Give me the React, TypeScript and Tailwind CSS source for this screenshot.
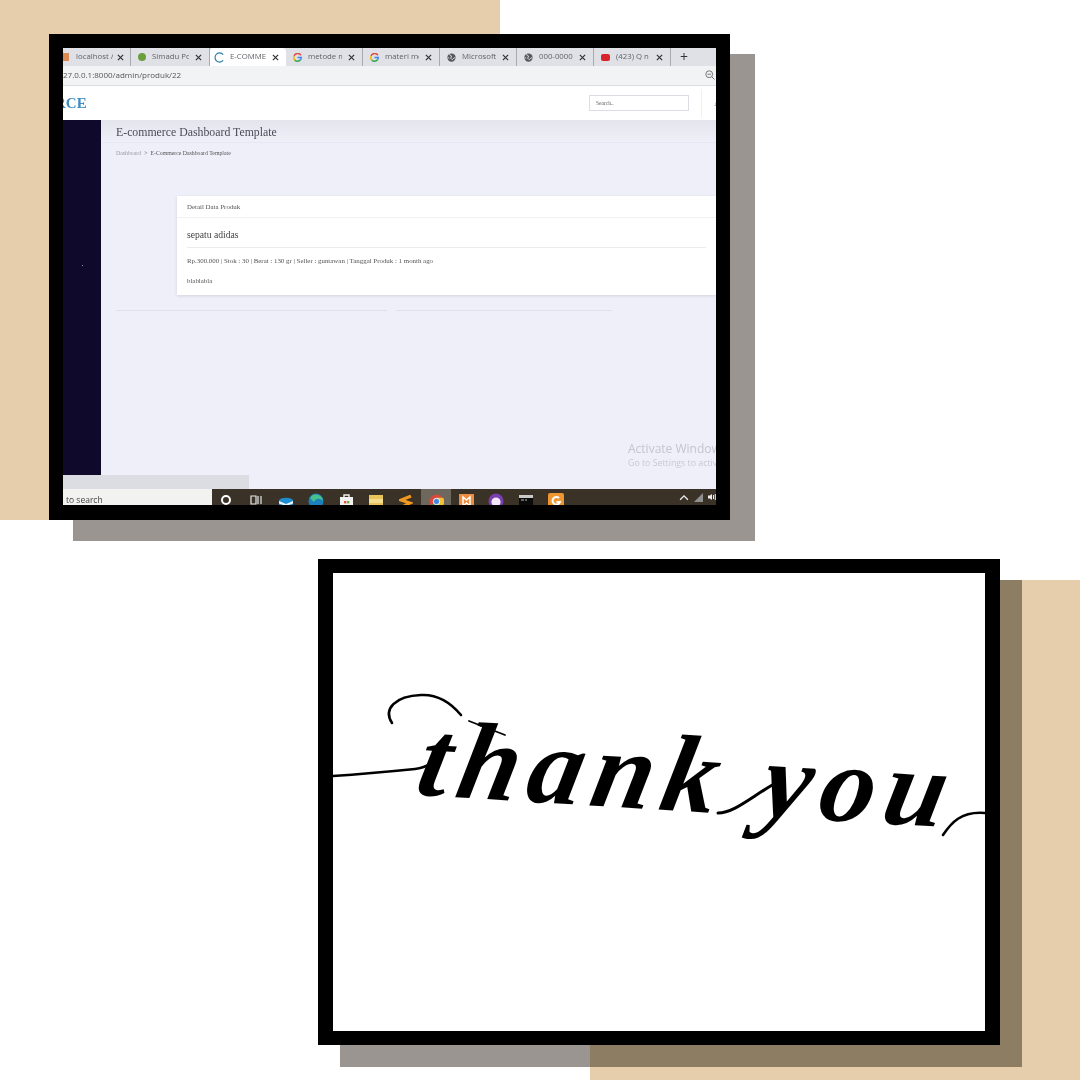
import React from "react";

const tabs = [
  { t: "Simadu Pol", c: "#6b9e3c", w: 79 },
  { t: "E-COMMER", c: "active", w: 76 },
  { t: "metode m", c: "g", w: 77 },
  { t: "materi met", c: "g", w: 77 },
  { t: "Microsoft", c: "globe", w: 77 },
  { t: "000-0000-", c: "globe", w: 77 },
  { t: "(423) Q n A", c: "yt", w: 77 },
];

function TabIcon({ c }: { c: string }) {
  if (c === "active")
    return (
      <svg width="11" height="11" viewBox="0 0 12 12" className="shrink-0">
        <path d="M10 2.8A5 5 0 1 0 10 9.2" fill="none" stroke="#2f7fa8" strokeWidth="1.3" />
      </svg>
    );
  if (c === "g")
    return (
      <svg width="9" height="9" viewBox="0 0 12 12" className="shrink-0">
        <path d="M10.5 3A5 5 0 0 0 1.5 4" fill="none" stroke="#e0483b" strokeWidth="2" />
        <path d="M1.5 4A5 5 0 0 0 2.5 9.5" fill="none" stroke="#f2b600" strokeWidth="2" />
        <path d="M2.5 9.5A5 5 0 0 0 10 9" fill="none" stroke="#34a853" strokeWidth="2" />
        <path d="M6 6H11A5 5 0 0 1 10 9" fill="none" stroke="#4285f4" strokeWidth="2" />
      </svg>
    );
  if (c === "globe")
    return (
      <svg width="9" height="9" viewBox="0 0 12 12" className="shrink-0">
        <circle cx="6" cy="6" r="5.5" fill="#55585c" />
        <path d="M3 2L6 4L5 7L7 9L9 7L11 6M1 6L3 7" fill="none" stroke="#e4e6ea" strokeWidth="1.2" />
      </svg>
    );
  if (c === "yt")
    return <span className="w-[9px] h-[7px] rounded-[2px] bg-[#d8232a] shrink-0" />;
  return <span className="w-[8px] h-[8px] rounded-full shrink-0" style={{ background: c }} />;
}

function Close() {
  return (
    <svg width="7" height="7" viewBox="0 0 8 8" className="shrink-0">
      <path d="M1 1L7 7M7 1L1 7" stroke="#333" strokeWidth="1.4" />
    </svg>
  );
}

function Tab({ t, c, w }: { t: string; c: string; w: number }) {
  const active = c === "active";
  return (
    <div
      className={`flex items-center h-full pr-[7px] shrink-0 ${active ? "bg-white rounded-t-[4px] pl-[4px] gap-[5px]" : "border-r border-[#a9abb0] pl-[7px] gap-[6px]"}`}
      style={{ width: w }}
    >
      <TabIcon c={c} />
      <span className="flex-1 overflow-hidden whitespace-nowrap text-[7.8px] text-[#5f6368]">{t}</span>
      <Close />
    </div>
  );
}

function Cell({ children, hi }: { children: React.ReactNode; hi?: boolean }) {
  return (
    <div className={`w-[30px] h-[24px] shrink-0 flex justify-center pt-[4px] ${hi ? "bg-[#6d675e]" : ""}`}>{children}</div>
  );
}

function Taskbar() {
  return (
    <div className="flex-1 bg-[#3a3226] overflow-hidden">
      <div className="flex items-start -ml-[1px]">
        <Cell><span className="w-[10px] h-[10px] rounded-full border-2 border-white mt-[2px]" /></Cell>
        <Cell>
          <svg width="12" height="12" viewBox="0 0 12 12" className="mt-[1px]"><path d="M1 2h5v8H1zM8 2v8M11 2v8" fill="none" stroke="#e8e8e8" strokeWidth="1.2" /></svg>
        </Cell>
        <Cell>
          <svg width="16" height="16" viewBox="0 0 16 16" className="mt-[2px]"><path d="M1 5C4 2 12 2 15 5V16H1z" fill="#1f8ed0" /><path d="M1 6L8 9L15 6V8.5L8 11L1 8.5z" fill="#e9f5fb" /></svg>
        </Cell>
        <Cell>
          <svg width="16" height="16" viewBox="0 0 16 16"><circle cx="8" cy="8" r="7.5" fill="#1c7fc0" /><path d="M2 5A7 7 0 0 1 15 8C12 5 8 5 6 9z" fill="#45c38a" /></svg>
        </Cell>
        <Cell>
          <svg width="15" height="16" viewBox="0 0 15 16"><path d="M5 4V2h5v2" fill="none" stroke="#f0f0f0" strokeWidth="1.4" /><rect x="1" y="4" width="13" height="12" fill="#f2f2f2" /><rect x="5" y="8" width="2.4" height="2.4" fill="#e2563a" /><rect x="8" y="8" width="2.4" height="2.4" fill="#6fb43f" /></svg>
        </Cell>
        <Cell>
          <svg width="14" height="16" viewBox="0 0 14 16" className="mt-[2px]"><rect width="14" height="16" fill="#e8c45a" /><rect x="0" y="4" width="14" height="4" fill="#f4dd8e" /><rect x="3" y="11" width="8" height="5" fill="#4f8f9e" /></svg>
        </Cell>
        <Cell>
          <svg width="14" height="15" viewBox="0 0 14 15" className="mt-[2px]"><path d="M12 1L2 5L11 8L3 12" fill="none" stroke="#f29a1f" strokeWidth="3" /></svg>
        </Cell>
        <Cell hi>
          <svg width="15" height="15" viewBox="0 0 16 16" className="mt-[1px]"><circle cx="8" cy="8" r="7.5" fill="#d9483b" /><path d="M2 12A7.5 7.5 0 0 0 12 14.5L8 8z" fill="#4fa04a" /><path d="M8 4h7A7.5 7.5 0 0 1 10 15.5z" fill="#f2c230" /><circle cx="8" cy="8" r="3.4" fill="#4a86d8" stroke="#fff" strokeWidth="1" /></svg>
        </Cell>
        <Cell>
          <svg width="15" height="15" viewBox="0 0 15 15" className="mt-[1px]"><rect width="15" height="15" fill="#ef8b3c" /><path d="M4 3L7.5 6L11 3V12L7.5 9L4 12z" fill="none" stroke="#fff" strokeWidth="1.5" /></svg>
        </Cell>
        <Cell>
          <svg width="16" height="16" viewBox="0 0 16 16"><circle cx="8" cy="8" r="7.5" fill="#7a3fae" /><circle cx="8" cy="9" r="4.6" fill="#f3e8fa" /></svg>
        </Cell>
        <Cell>
          <svg width="14" height="13" viewBox="0 0 14 13" className="mt-[2px]"><rect width="14" height="13" fill="#0a0a0a" /><rect width="14" height="3" fill="#c9c9c9" /><path d="M2 5h3M6 5h2" stroke="#bbb" strokeWidth="1" /></svg>
        </Cell>
        <Cell>
          <svg width="16" height="16" viewBox="0 0 16 16"><rect width="16" height="16" rx="2" fill="#ee962f" /><path d="M11 5A3.8 3.8 0 1 0 12 9H8.5" fill="none" stroke="#fff" strokeWidth="2" /></svg>
        </Cell>
        <div className="ml-auto flex items-center gap-[5px] h-[16px]">
          <svg width="10" height="7" viewBox="0 0 9 6"><path d="M1 5L4.5 1.5L8 5" fill="none" stroke="#eee" strokeWidth="1.2" /></svg>
          <svg width="9" height="9" viewBox="0 0 9 9"><path d="M0 9L9 0V9z" fill="#8f8f8f" /></svg>
          <svg width="8" height="8" viewBox="0 0 8 8"><path d="M0 2.5h2L4 1V7L2 5.5H0z" fill="#eee" /><path d="M5.5 2V6M7.3 1V7" stroke="#eee" strokeWidth="1" /></svg>
        </div>
      </div>
    </div>
  );
}

function BrowserShot() {
  return (
    <div className="w-full h-full flex flex-col overflow-hidden bg-[#eeeff8] font-['Open_Sans',sans-serif] blur-[0.35px]">
      <div className="h-[18px] bg-[#dfe1e6] flex items-center shrink-0 overflow-hidden">
        <div className="w-[68px] h-full flex items-center pr-[6px] gap-[4px] shrink-0 border-r border-[#a9abb0]">
          <span className="w-[6px] h-[8px] bg-[#d98a55] shrink-0" />
          <span className="flex-1 text-[7.8px] text-[#5f6368] whitespace-nowrap overflow-hidden ml-[3px]">localhost /</span>
          <Close />
        </div>
        {tabs.map((t) => (
          <Tab key={t.t} {...t} />
        ))}
        <span className="ml-[9px] text-[14px] leading-none text-[#333]">+</span>
      </div>
      <div className="h-[20px] pb-[2px] bg-[#f2f3f5] border-b border-[#dcdde0] flex items-center justify-between shrink-0 pr-[1px]">
        <span className="text-[8px] text-[#555] whitespace-nowrap">27.0.0.1:8000/admin/produk/22</span>
        <svg width="10" height="10" viewBox="0 0 10 10"><circle cx="4.2" cy="4.2" r="3.4" fill="none" stroke="#777" strokeWidth="1" /><path d="M7 7L9.5 9.5M2.5 4.2h3.4" stroke="#777" strokeWidth="1" /></svg>
      </div>
      <div className="h-[34px] bg-white flex items-center justify-between shrink-0 font-['Liberation_Serif',serif]">
        <span className="text-[15px] font-bold text-[#3d8cc2] leading-none -ml-[8px]">RCE</span>
        <div className="flex items-center h-full">
          <div className="w-[100px] h-[16px] border border-[#dcdde3] text-[5.5px] text-[#666] flex items-center pl-[6px]">Search..</div>
          <div className="w-[1px] h-[28px] bg-[#f0f0f3] ml-[12px]" />
          <span className="ml-[12px] text-[9px] leading-none text-[#888] w-[2px] overflow-hidden">A</span>
        </div>
      </div>
      <div className="flex-1 flex min-h-0 font-['Liberation_Serif',serif]">
        <div className="w-[38px] h-full bg-[#0f0a2b] shrink-0 flex items-center justify-center">
          <span className="w-[1px] h-[1px] bg-[#8f8fa8] -mt-[64px]" />
        </div>
        <div className="flex-1 min-w-0 flex flex-col bg-[#eeeff8]">
          <div className="h-[23px] bg-gradient-to-b from-[#e4e4ec] to-[#eeeff8] border-b border-[#e6e7f0] pl-[15px] pt-[3px] flex items-center shrink-0">
            <span className="text-[11.8px] text-[#4c4c58] whitespace-nowrap">E-commerce Dashboard Template</span>
          </div>
          <div className="pl-[15px] h-[19px] pt-[1px] flex items-center gap-[3px] text-[5.8px] whitespace-nowrap shrink-0">
            <span className="text-[#9a9aa6]">Dashboard</span>
            <span className="text-[#777]">&gt;</span>
            <span className="text-[#555]">E-Commerce Dashboard Template</span>
          </div>
          <div className="ml-[76px] mt-[34px] h-[99px] bg-white shadow-[0_1px_3px_rgba(0,0,0,0.12)] flex flex-col shrink-0 text-[#555]">
            <div className="h-[22px] pt-[2px] border-b border-[#f0f0f4] pl-[10px] flex items-center text-[6.9px] shrink-0">Detail Data Produk</div>
            <div className="mx-[10px] h-[30px] pt-[5px] border-b border-[#ebebef] flex items-center text-[9.6px] text-[#444] shrink-0">sepatu adidas</div>
            <div className="pl-[10px] h-[25px] pt-[2px] flex items-center text-[6.9px] whitespace-nowrap shrink-0">Rp.300.000 | Stok : 30 | Berat : 130 gr | Seller : guntawan | Tanggal Produk : 1 month ago</div>
            <div className="pl-[10px] pt-[1px] text-[6.9px] leading-[14px]">blablabla</div>
          </div>
          <div className="flex ml-[15px] mt-[15px] gap-[9px] shrink-0">
            <div className="w-[271px] h-[1px] bg-[#dfe0ea]" />
            <div className="w-[216px] h-[1px] bg-[#dfe0ea]" />
          </div>
          <div className="flex-1 min-h-0 flex flex-col justify-end pl-[527px] pb-[6px] font-['Open_Sans',sans-serif] whitespace-nowrap overflow-hidden">
            <span className="text-[12px] leading-[16px] text-[#c4c5cd]">Activate Windows</span>
            <span className="text-[8.8px] leading-[12px] text-[#c8c9d1]">Go to Settings to activate</span>
          </div>
        </div>
      </div>
      <div className="h-[30px] shrink-0 flex flex-col">
        <div className="h-[14px] w-[186px] bg-[#dcdde3] shrink-0" />
        <div className="h-[16px] flex shrink-0">
          <div className="w-[149px] h-full bg-[#f2f2f0] text-[8.5px] text-[#444] leading-[21px] pl-[3px] shrink-0 overflow-hidden whitespace-nowrap">to search</div>
          <Taskbar />
        </div>
      </div>
    </div>
  );
}

export default function App() {
  return (
    <div className="relative w-[1080px] h-[1080px] bg-white overflow-hidden">
      <div className="absolute left-0 top-0 w-[500px] h-[520px] bg-[#e6ceac]" />
      <div className="absolute left-[590px] top-[580px] w-[490px] h-[500px] bg-[#e6ceac]" />

      <div className="absolute left-[73px] top-[54px] w-[682px] h-[487px] bg-[#9a9591]" />
      <div className="absolute left-[49px] top-[34px] w-[681px] h-[486px] bg-black pl-[14px] pr-[14px] pt-[14px] pb-[15px]">
        <BrowserShot />
      </div>

      <div className="absolute left-[340px] top-[580px] w-[682px] h-[487px] bg-[#9a9591] flex justify-end">
        <div className="w-[432px] h-full bg-[#8d7d62]" />
      </div>
      <div className="absolute left-[318px] top-[559px] w-[682px] h-[486px] bg-black pl-[15px] pr-[15px] pt-[14px] pb-[14px]">
        <div className="relative w-full h-full bg-white overflow-hidden">
          <svg viewBox="0 0 652 458" className="absolute inset-0 w-full h-full" fill="none" stroke="#000" strokeLinecap="round">
            <path d="M0 203C30 201 62 198 82 196C92 195 100 190 106 184" strokeWidth="2.6" />
            <path d="M59 150C50 136 62 123 88 122C106 121 118 130 128 142" strokeWidth="2.6" />
            <path d="M136 148L172 162" strokeWidth="1.8" />
            <path d="M385 240C402 240 420 222 448 207" strokeWidth="3" />
            <path d="M610 262C618 250 628 238 652 240" strokeWidth="2.6" />
          </svg>
          <span className="absolute left-[88px] top-[110px] text-[110px] leading-[150px] font-bold italic text-black whitespace-nowrap font-['Liberation_Serif',serif] tracking-[9px] rotate-[3.5deg] skew-x-[-8deg] origin-left">
            thank you
          </span>
        </div>
      </div>
    </div>
  );
}
